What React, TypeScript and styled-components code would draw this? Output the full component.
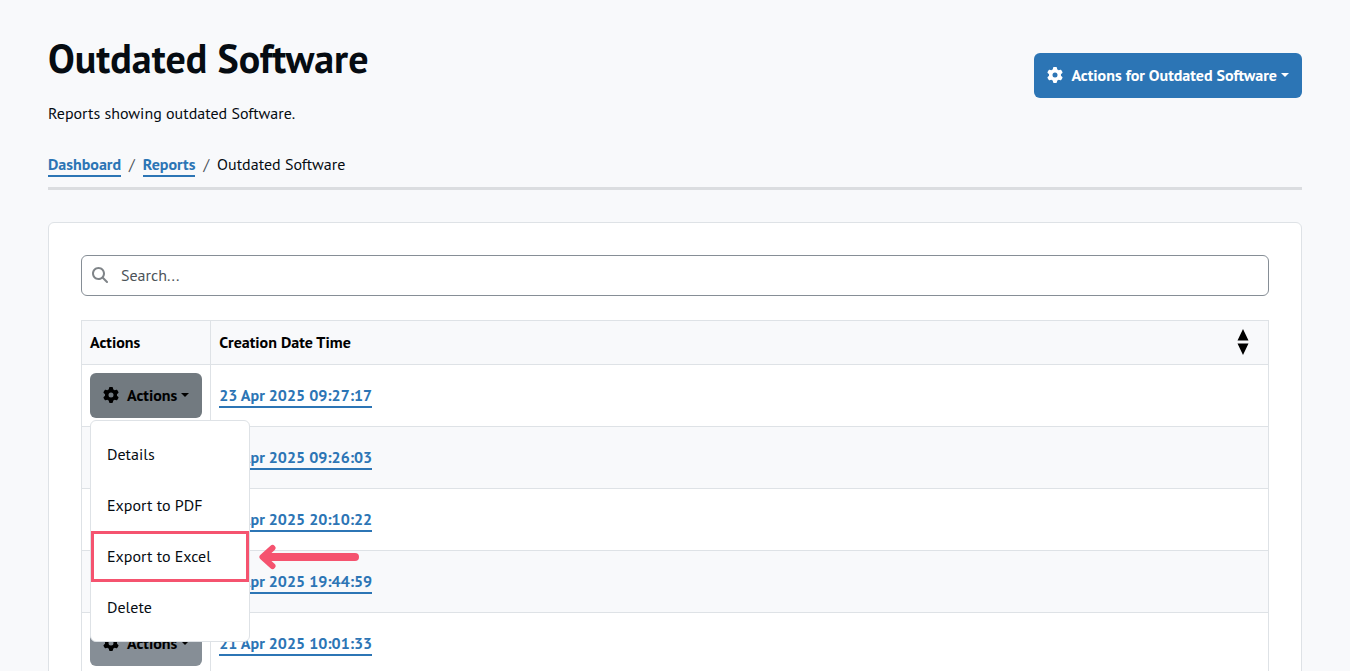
import React from 'react';
import styled, { createGlobalStyle } from 'styled-components';
import { FaGear, FaMagnifyingGlass } from 'react-icons/fa6';

const GlobalStyle = createGlobalStyle`
  *, *::before, *::after { box-sizing: border-box; }
  html { scrollbar-width: none; }
  body {
    margin: 0;
    background: #f8f9fb;
    color: #060c12;
    font-family: 'PT Sans', 'Noto Sans', sans-serif;
    font-size: 16px;
    line-height: 24px;
  }
  button, input { font: inherit; color: inherit; }
`;

const Page = styled.main`
  padding: 34px 48px 32px;
`;

const Header = styled.header`
  display: flex;
  align-items: flex-start;
  justify-content: space-between;
  padding-bottom: 10px;
  border-bottom: 3px solid #dbdde0;
`;

const Title = styled.h1`
  margin: 0 0 19px;
  font-size: 40px;
  line-height: 48px;
  font-weight: 700;
`;

const Lead = styled.p`
  margin: 0 0 27px;
`;

const Crumbs = styled.ol`
  display: flex;
  margin: 0;
  padding: 0;
  list-style: none;
`;

const Crumb = styled.li`
  & + &::before {
    content: '/';
    padding: 0 8px;
    color: #4c5359;
  }
`;

const TextLink = styled.a`
  display: inline-block;
  padding-bottom: 1px;
  line-height: 20px;
  border-bottom: 2px solid #2c75b5;
  color: #2c75b5;
  font-weight: 700;
  text-decoration: none;
`;

const ActionButton = styled.button<{ $tone: 'primary' | 'secondary' | 'open' }>`
  display: inline-flex;
  align-items: center;
  height: 45px;
  padding: 0 13px 1px;
  border: 0;
  border-radius: 6px;
  background: ${({ $tone }) => ({ primary: '#2c75b5', secondary: '#868e96', open: '#727a80' })[$tone]};
  color: ${({ $tone }) => ($tone === 'primary' ? '#fff' : '#000')};
  font-weight: 700;
  white-space: nowrap;

  svg { margin-right: 8px; }

  &::after {
    content: '';
    margin-left: 4px;
    border-top: 4px solid;
    border-left: 4px solid transparent;
    border-right: 4px solid transparent;
  }
`;

const HeaderActions = styled.div`
  padding-top: 19px;
`;

const Card = styled.section`
  margin-top: 32px;
  padding: 32px;
  border: 1px solid #dee2e6;
  border-radius: 6px;
  background: #fff;
`;

const Search = styled.label`
  display: flex;
  align-items: center;
  gap: 13px;
  height: 41px;
  margin-bottom: 24px;
  padding: 0 10px 1px;
  border: 1px solid #868e96;
  border-radius: 6px;
  color: #7f8488;
`;

const SearchInput = styled.input`
  flex: 1;
  min-width: 0;
  padding: 0;
  border: 0;
  outline: 0;
  background: transparent;
  color: #060c12;
  &::placeholder { color: #4c5359; opacity: 1; }
`;

const Table = styled.table`
  width: 100%;
  border-collapse: collapse;
`;

const HeadCell = styled.th`
  height: 44px;
  padding: 0 8px 2px;
  border: 1px solid #dee2e6;
  background: #f8f9fb;
  color: #000;
  text-align: left;
`;

const SortHeader = styled.div`
  display: flex;
  align-items: center;
  justify-content: space-between;
  padding-right: 11px;
`;

const SortButton = styled.button`
  display: flex;
  padding: 0;
  border: 0;
  background: none;
`;

const Row = styled.tr`
  &:nth-child(even) { background: #f8f9fb; }
`;

const Cell = styled.td<{ $narrow?: boolean }>`
  height: 62px;
  padding: 8px;
  width: ${({ $narrow }) => ($narrow ? '129px' : 'auto')};
  border: 1px solid #dee2e6;
`;

const Dropdown = styled.div`
  position: relative;
  display: flex;
`;

const Menu = styled.ul`
  position: absolute;
  z-index: 1;
  top: 47px;
  left: 0;
  width: 160px;
  margin: 0;
  padding: 8px 0;
  border: 1px solid #dee2e6;
  border-radius: 6px;
  background: #fff;
  list-style: none;
`;

const MenuItem = styled.li<{ $marked?: boolean }>`
  position: relative;
  height: 51px;
  outline: ${({ $marked }) => ($marked ? '3px solid #f5536f' : 'none')};
  outline-offset: -3px;
`;

const MenuButton = styled.button`
  width: 100%;
  height: 100%;
  padding: 0 16px 2px;
  border: 0;
  background: none;
  text-align: left;
`;

const Arrow = styled.svg`
  position: absolute;
  top: 13px;
  left: 168px;
`;

const menuItems = ['Details', 'Export to PDF', 'Export to Excel', 'Delete'];
const reports = [
  '23 Apr 2025 09:27:17',
  '23 Apr 2025 09:26:03',
  '22 Apr 2025 20:10:22',
  '22 Apr 2025 19:44:59',
  '21 Apr 2025 10:01:33',
];

function ActionsMenu() {
  return (
    <Menu>
      {menuItems.map((item) => {
        const marked = item === 'Export to Excel';
        return (
          <MenuItem key={item} $marked={marked}>
            <MenuButton type="button">{item}</MenuButton>
            {marked && (
              <Arrow width="101" height="26" viewBox="0 0 101 26" fill="none" aria-hidden="true">
                <path d="M96 13H7" stroke="#f5536f" strokeWidth="8" strokeLinecap="round" />
                <path d="M13.500 4L3.500 13L13.500 22" stroke="#f5536f" strokeWidth="6" strokeLinecap="round" strokeLinejoin="round" />
              </Arrow>
            )}
          </MenuItem>
        );
      })}
    </Menu>
  );
}

export default function App() {
  return (
    <>
      <GlobalStyle />
      <Page>
        <Header>
          <div>
            <Title>Outdated Software</Title>
            <Lead>Reports showing outdated Software.</Lead>
            <nav aria-label="Breadcrumb">
              <Crumbs>
                <Crumb><TextLink href="#dashboard">Dashboard</TextLink></Crumb>
                <Crumb><TextLink href="#reports">Reports</TextLink></Crumb>
                <Crumb aria-current="page">Outdated Software</Crumb>
              </Crumbs>
            </nav>
          </div>
          <HeaderActions>
            <ActionButton type="button" $tone="primary">
              <FaGear size={16} />
              Actions for Outdated Software
            </ActionButton>
          </HeaderActions>
        </Header>
        <Card>
          <Search>
            <FaMagnifyingGlass size={16} />
            <SearchInput type="text" placeholder="Search..." aria-label="Search" />
          </Search>
          <Table>
            <thead>
              <tr>
                <HeadCell scope="col">Actions</HeadCell>
                <HeadCell scope="col">
                  <SortHeader>
                    Creation Date Time
                    <SortButton type="button" aria-label="Sort by creation date time">
                      <svg width="12" height="26" viewBox="0 0 12 26" fill="currentColor" aria-hidden="true">
                        <path d="M6 0L11.5 11.5H.5zM.5 14.5h11L6 26z" />
                      </svg>
                    </SortButton>
                  </SortHeader>
                </HeadCell>
              </tr>
            </thead>
            <tbody>
              {reports.map((date, index) => (
                <Row key={date}>
                  <Cell $narrow>
                    <Dropdown>
                      <ActionButton type="button" $tone={index === 0 ? 'open' : 'secondary'} aria-expanded={index === 0}>
                        <FaGear size={16} />
                        Actions
                      </ActionButton>
                      {index === 0 && <ActionsMenu />}
                    </Dropdown>
                  </Cell>
                  <Cell><TextLink href="#report">{date}</TextLink></Cell>
                </Row>
              ))}
            </tbody>
          </Table>
        </Card>
      </Page>
    </>
  );
}
